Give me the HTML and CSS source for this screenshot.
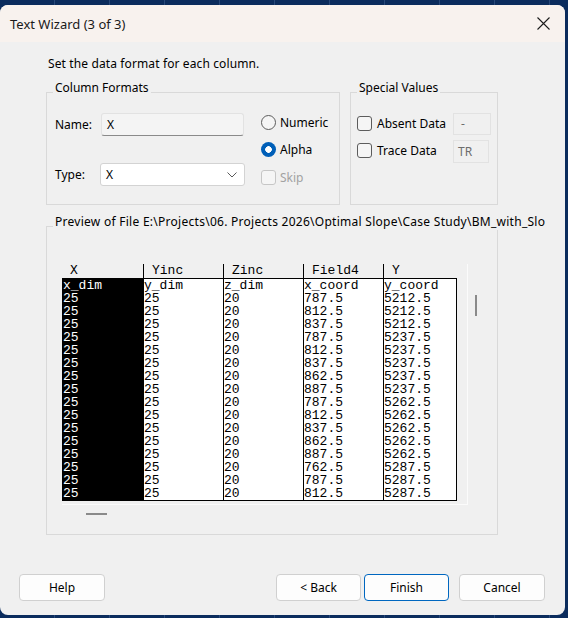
FILE: index.html
```html
<!DOCTYPE html>
<html>

<head>
    <meta charset="UTF-8">
    <title>Text Wizard (3 of 3)</title>
    <link rel="stylesheet" href="styles.css">
</head>

<body>
    <div class="window">
        <div class="titlebar">
            <span class="title">Text Wizard (3 of 3)</span>
            <!-- close button glyph -->
            <svg class="close" width="13" height="13" viewBox="0 0 13 13">
                <path d="M0.5 0.5 L12.5 12.5 M12.5 0.5 L0.5 12.5" stroke="#1c1c1c" stroke-width="1.1" fill="none"/>
            </svg>
        </div>

        <div class="content">
            <p class="intro">Set the data format for each column.</p>

            <div class="groups">
                <div class="group formats">
                    <div class="group-title">Column Formats</div>
                    <div class="formats-body">
                        <div class="fields">
                            <div class="field">
                                <span class="label name-label">Name:</span>
                                <div class="textbox">X</div>
                            </div>
                            <div class="field type-field">
                                <span class="label">Type:</span>
                                <div class="select">
                                    <span>X</span>
                                    <svg width="10" height="6" viewBox="0 0 10 6">
                                        <path d="M0.5 0.5 L5 5 L9.5 0.5" stroke="#5a5a5a" stroke-width="1" fill="none"/>
                                    </svg>
                                </div>
                            </div>
                        </div>
                        <div class="options">
                            <div class="option"><span class="radio"></span>Numeric</div>
                            <div class="option alpha"><span class="radio checked"></span>Alpha</div>
                            <div class="option skip disabled"><span class="check off"></span>Skip</div>
                        </div>
                    </div>
                </div>

                <div class="group special">
                    <div class="group-title">Special Values</div>
                    <div class="special-body">
                        <div class="sv-row">
                            <span class="check"></span>
                            <span class="sv-label">Absent Data</span>
                            <div class="sv-input absent">-</div>
                        </div>
                        <div class="sv-row trace">
                            <span class="check"></span>
                            <span class="sv-label">Trace Data</span>
                            <div class="sv-input tr">TR</div>
                        </div>
                    </div>
                </div>
            </div>

            <div class="group preview">
                <div class="group-title">Preview of File E:\Projects\06. Projects 2026\Optimal Slope\Case Study\BM_with_Slo</div>
                <div class="preview-body">
                    <div class="scroll-row">
                        <div class="frame">
                            <div class="head">
                                <span class="h1">X</span>
                                <span>Yinc</span>
                                <span>Zinc</span>
                                <span>Field4</span>
                                <span class="h5">Y</span>
                            </div>
                            <div class="grid">
                                <div class="col c1">x_dim
25
25
25
25
25
25
25
25
25
25
25
25
25
25
25
25</div>
                                <div class="col">y_dim
25
25
25
25
25
25
25
25
25
25
25
25
25
25
25
25</div>
                                <div class="col">z_dim
20
20
20
20
20
20
20
20
20
20
20
20
20
20
20
20</div>
                                <div class="col">x_coord
787.5
812.5
837.5
787.5
812.5
837.5
862.5
887.5
787.5
812.5
837.5
862.5
887.5
762.5
787.5
812.5</div>
                                <div class="col c5">y_coord
5212.5
5212.5
5212.5
5237.5
5237.5
5237.5
5237.5
5237.5
5262.5
5262.5
5262.5
5262.5
5262.5
5287.5
5287.5
5287.5</div>
                            </div>
                        </div>
                        <div class="vthumb"></div>
                    </div>
                    <div class="hthumb"></div>
                </div>
            </div>
        </div>

        <div class="buttons">
            <button type="button" class="btn help">Help</button>
            <button type="button" class="btn back">&lt; Back</button>
            <button type="button" class="btn finish">Finish</button>
            <button type="button" class="btn cancel">Cancel</button>
        </div>
    </div>
</body>

</html>
```

FILE: styles.css
```css
body {
    margin: 0;
    background-color: #0b2c5d;
    background-image: repeating-linear-gradient(90deg, transparent 0, transparent 54px, #28497a 54px, #28497a 55px);
    font-family: "Noto Sans", sans-serif;
    font-size: 12px;
    color: #000000;
}

.window {
    margin-top: 5px;
    width: 565px;
    height: 610px;
    background-color: #f0f0f0;
    border-radius: 8px;
    overflow: hidden;
    display: flex;
    flex-direction: column;
}

.titlebar {
    height: 37px;
    flex: none;
    background-color: #f8f2ee;
    display: flex;
    align-items: center;
    justify-content: space-between;
    padding: 0 15px 0 10px;
}

.title {
    font-size: 13px;
    color: #1a1a1a;
}

.content {
    padding-left: 46px;
}

.intro {
    margin: 14px 0 0 2px;
    line-height: 16px;
    letter-spacing: 0.12px;
}

.groups {
    display: flex;
    gap: 10px;
    margin-top: 20px;
}

.group {
    border: 1px solid #d9d9d9;
    box-sizing: border-box;
}

.group-title {
    margin: -13px 0 0 6px;
    padding: 0 2px;
    line-height: 16px;
    background-color: #f0f0f0;
    width: max-content;
}

.formats {
    width: 294px;
    height: 113px;
}

.special {
    width: 148px;
    height: 113px;
}

/* column formats */
.formats-body {
    display: flex;
    margin-top: 17px;
    padding-left: 8px;
}

.fields {
    width: 190px;
}

.field {
    display: flex;
    align-items: center;
    height: 23px;
}

.type-field {
    margin-top: 27px;
}

.label {
    width: 45px;
}

.name-label {
    width: 46px;
}

.textbox {
    width: 143px;
    height: 23px;
    box-sizing: border-box;
    background-color: #f4f4f4;
    border: 1px solid #e2e2e2;
    border-bottom-color: #8a8a8a;
    border-radius: 3px;
    padding-left: 5px;
    line-height: 21px;
}

.select {
    width: 145px;
    height: 23px;
    box-sizing: border-box;
    background-color: #ffffff;
    border: 1px solid #d3d3d3;
    border-radius: 3px;
    padding: 0 7px 0 5px;
    display: flex;
    align-items: center;
    justify-content: space-between;
}

.options {
    margin: 1px 0 0 16px;
}

.option {
    display: flex;
    align-items: center;
    height: 16px;
    gap: 4px;
}

.alpha {
    margin-top: 11px;
}

.skip {
    margin-top: 12px;
}

.disabled {
    color: #a2a2a2;
}

.radio {
    width: 15px;
    height: 15px;
    box-sizing: border-box;
    border: 1px solid #5c5c5c;
    border-radius: 50%;
    background-color: #f5f5f5;
}

.radio.checked {
    border: none;
    background: radial-gradient(circle, #ffffff 0, #ffffff 3px, #005fb8 3.6px);
}

.check {
    width: 15px;
    height: 15px;
    box-sizing: border-box;
    border: 1px solid #5c5c5c;
    border-radius: 3px;
    background-color: #f5f5f5;
    flex: none;
}

.check.off {
    border-color: #c6c6c6;
}

/* special values */
.special-body {
    margin-top: 17px;
    padding-left: 6px;
}

.sv-row {
    display: flex;
    align-items: center;
    height: 22px;
}

.sv-row .check {
    margin-top: -2px;
}

.trace {
    margin-top: 5px;
}

.sv-label {
    width: 76px;
    margin-left: 5px;
    margin-top: -2px;
}

.sv-input {
    width: 38px;
    height: 22px;
    box-sizing: border-box;
    border: 1px solid #e2e2e2;
    background-color: #f0f0f0;
    color: #6d6d6d;
    padding-left: 7px;
    line-height: 19px;
}

.sv-input.tr {
    width: 36px;
    height: 23px;
    padding-left: 4px;
    line-height: 21px;
}

/* preview of file */
.preview {
    margin-top: 21px;
    width: 452px;
    height: 309px;
}

.preview .group-title {
    letter-spacing: 0.27px;
    white-space: nowrap;
}

.preview-body {
    padding: 34px 0 0 15px;
}

.scroll-row {
    display: flex;
    align-items: flex-start;
}

.frame {
    padding: 0 10px 3px 0;
    border-right: 1px solid #fbfbfb;
    border-bottom: 1px solid #fbfbfb;
}

.head {
    display: flex;
    height: 14px;
    line-height: 14px;
    font-family: "Liberation Mono", monospace;
    font-size: 13px;
}

.head span {
    width: 71px;
    padding-left: 8px;
    border-left: 1px solid #000000;
}

.head .h1 {
    width: 73px;
    padding-left: 8px;
    border-left: none;
}

.head .h5 {
    width: 64px;
}

.grid {
    display: flex;
    border: 1px solid #000000;
    background-color: #ffffff;
    font-family: "Liberation Mono", monospace;
    font-size: 13px;
    line-height: 13px;
}

.col {
    width: 79px;
    border-left: 1px solid #000000;
    white-space: pre-line;
    overflow: hidden;
}

.col.c1 {
    width: 80px;
    border-left: none;
    background-color: #000000;
    color: #ffffff;
}

.col.c5 {
    width: 72px;
}

.vthumb {
    width: 2px;
    height: 21px;
    margin: 31px 0 0 7px;
    background-color: #8a8a8a;
}

.hthumb {
    width: 21px;
    height: 2px;
    margin: 8px 0 0 24px;
    background-color: #8a8a8a;
}

/* dialog buttons */
.buttons {
    display: flex;
    margin-top: 39px;
    padding-left: 19px;
}

.btn {
    height: 27px;
    box-sizing: border-box;
    border: 1px solid #d0d0d0;
    border-radius: 4px;
    background-color: #fdfdfd;
    font-family: "Noto Sans", sans-serif;
    font-size: 12px;
    color: #000000;
    padding: 0;
}

.help {
    width: 86px;
}

.back {
    width: 85px;
    margin-left: 171px;
}

.finish {
    width: 85px;
    margin-left: 3px;
    border-color: #0067c0;
}

.cancel {
    width: 86px;
    margin-left: 10px;
}
```
